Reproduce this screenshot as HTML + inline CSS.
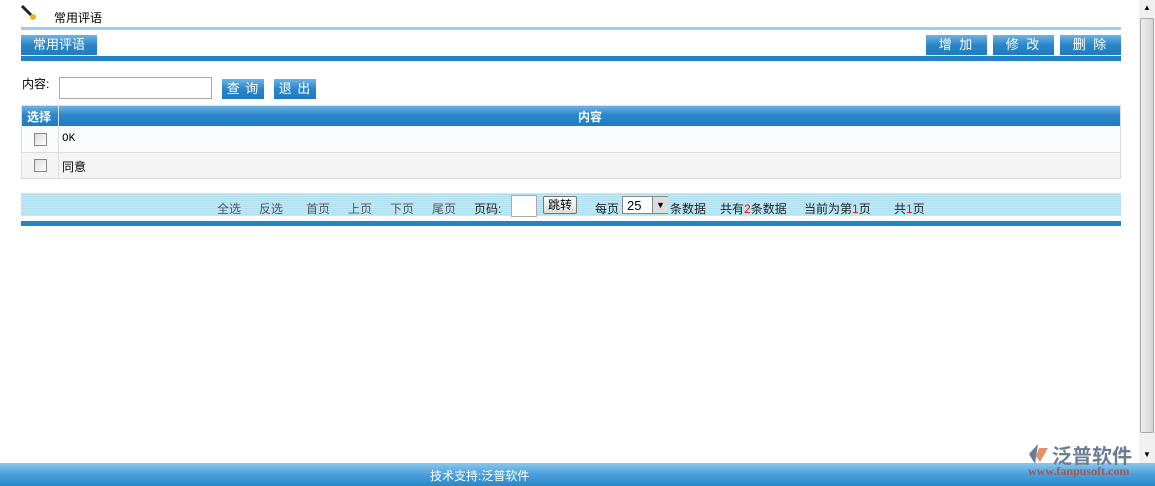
<html><head><style>
body{margin:0;width:1155px;height:486px;background:#fff;font-family:"Liberation Sans","Noto Sans CJK SC",sans-serif;font-size:12px;position:relative;overflow:hidden}
.a{position:absolute;white-space:nowrap}
.btn{position:absolute;height:20px;background:linear-gradient(#6fb3e3,#2a86c8 50%,#1f7cc0);color:#fff;text-align:center;line-height:20px;font-size:13px;letter-spacing:2px}
.cb{position:absolute;width:11px;height:11px;border:1px solid #888;background:linear-gradient(135deg,#ddd,#fff)}
.p{position:absolute;top:200px;color:#555}
</style></head><body>
<svg class="a" style="left:20px;top:4px" width="18" height="16"><line x1="2" y1="2" x2="11" y2="11" stroke="#222" stroke-width="3"/><circle cx="13" cy="13" r="3" fill="#f0b020"/></svg>
<div class="a" style="left:54px;top:9px;font-size:12px">常用评语</div>
<div class="a" style="left:21px;top:27px;width:1100px;height:3px;background:#9fcbee"></div>
<div class="btn" style="left:21px;top:35px;width:76px;letter-spacing:0">常用评语</div>
<div class="btn" style="left:926px;top:35px;width:61px">增 加</div>
<div class="btn" style="left:993px;top:35px;width:61px">修 改</div>
<div class="btn" style="left:1060px;top:35px;width:61px">删 除</div>
<div class="a" style="left:21px;top:56px;width:1100px;height:5px;background:#2383c5"></div>
<div class="a" style="left:22px;top:75px;font-size:12px">内容:</div>
<div class="a" style="left:59px;top:77px;width:151px;height:20px;border:1px solid #aaa"></div>
<div class="btn" style="left:222px;top:79px;width:42px;letter-spacing:1px">查 询</div>
<div class="btn" style="left:274px;top:79px;width:42px;letter-spacing:1px">退 出</div>
<div class="a" style="left:21px;top:105px;width:1100px;height:74px;border:1px solid #ddd;box-sizing:border-box"></div>
<div class="a" style="left:22px;top:106px;width:1098px;height:20px;background:linear-gradient(#6fb3e3,#2a86c8 45%,#1f7cc0)"></div>
<div class="a" style="left:27px;top:108px;color:#fff;font-weight:bold;font-size:12px">选择</div>
<div class="a" style="left:578px;top:108px;color:#fff;font-weight:bold;font-size:12px">内容</div>
<div class="a" style="left:22px;top:126px;width:1098px;height:26px;background:#fafbfd;border-bottom:1px solid #ddd"></div>
<div class="a" style="left:22px;top:153px;width:1098px;height:25px;background:#f5f5f5"></div>
<div class="a" style="left:58px;top:106px;width:1px;height:72px;background:#ddd"></div>
<div class="cb" style="left:34px;top:133px"></div><div class="cb" style="left:34px;top:159px"></div>
<div class="a" style="left:62px;top:133px;font-family:'Liberation Mono',monospace;font-size:11px">OK</div>
<div class="a" style="left:62px;top:158px">同意</div>
<div class="a" style="left:21px;top:193px;width:1100px;height:23px;background:repeating-linear-gradient(#c7e8f5 0 1px,#b2dff0 1px 2px)"></div>
<div class="a" style="left:21px;top:221px;width:1100px;height:5px;background:#2383c5"></div>
<div class="p" style="left:217px">全选</div>
<div class="p" style="left:259px">反选</div>
<div class="p" style="left:306px">首页</div>
<div class="p" style="left:348px">上页</div>
<div class="p" style="left:390px">下页</div>
<div class="p" style="left:432px">尾页</div>
<div class="p" style="left:474px;color:#222">页码:</div>
<div class="a" style="left:511px;top:195px;width:24px;height:20px;background:#fff;border:1px solid #aaa"></div>
<div class="a" style="left:543px;top:196px;width:32px;height:16px;border:1px solid #777;border-radius:2px;background:linear-gradient(#fff,#ddd);text-align:center;font-size:12px;line-height:16px">跳转</div>
<div class="p" style="left:595px;color:#222">每页</div>
<div class="a" style="left:622px;top:196px;width:46px;height:18px;border:1px solid #888;background:#fff;font-size:13px;line-height:18px;padding-left:4px;box-sizing:border-box">25</div>
<div class="a" style="left:652px;top:197px;width:15px;height:16px;background:#ddd;border-left:1px solid #888;text-align:center;font-size:9px;line-height:16px">▼</div>
<div class="p" style="left:670px;color:#222">条数据</div>
<div class="p" style="left:720px;color:#222">共有<span style="color:red">2</span>条数据</div>
<div class="p" style="left:804px;color:#222">当前为第<span style="color:red">1</span>页</div>
<div class="p" style="left:894px;color:#222">共<span style="color:red">1</span>页</div>
<div class="a" style="left:1139px;top:0;width:16px;height:463px;background:#f0f0f0"></div>
<div class="a" style="left:1140px;top:18px;width:14px;height:415px;background:linear-gradient(90deg,#eee,#d4d4d4);border:1px solid #aaa;box-sizing:border-box;border-radius:2px"></div>
<div class="a" style="left:1143px;top:3px;font-size:8px">▲</div>
<div class="a" style="left:1143px;top:450px;font-size:8px">▼</div>
<div class="a" style="left:0;top:463px;width:1155px;height:23px;background:linear-gradient(#8cc6ec,#4aa0dc 50%,#2b86c8)"></div>
<div class="a" style="left:430px;top:467px;color:#fff;font-size:12px">技术支持:泛普软件</div>
<svg class="a" style="left:1026px;top:442px" width="24" height="24"><path d="M12 2 L3 12 L9 22 Z" fill="#6a7c96"/><path d="M13 6 L22 6 L14 20 L10 14Z" fill="#e4926a"/></svg>
<div class="a" style="left:1052px;top:440px;font-size:20px;color:#6c7c95;font-weight:bold">泛普软件</div>
<div class="a" style="left:1028px;top:464px;font-size:12px;color:#a05a50;font-family:'Liberation Serif',serif;font-weight:bold">www.fanpusoft.com</div>
</body></html>
